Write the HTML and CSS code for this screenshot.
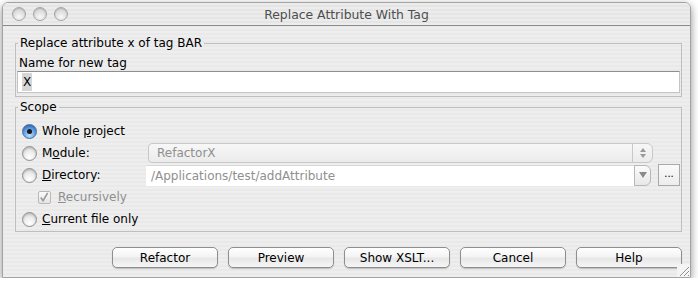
FILE: index.html
```html
<!DOCTYPE html>
<html>
<head>
  <title>Replace Attribute With Tag</title>
  <link rel="stylesheet" href="styles.css">
</head>
<body>
  <div class="window">
    <div class="titlebar">
      <div class="lights">
        <span class="light"></span>
        <span class="light"></span>
        <span class="light"></span>
      </div>
      <div class="title">Replace Attribute With Tag</div>
      <div></div>
    </div>

    <div class="content">
      <fieldset class="group">
        <legend>Replace attribute x of tag BAR</legend>
        <div class="field-label">Name for new tag</div>
        <div class="textfield"><span class="selected">X</span></div>
      </fieldset>

      <fieldset class="group scope">
        <legend>Scope</legend>
        <div class="options">
          <div class="option">
            <span class="radio checked"></span>
            <span class="choice">Whole <u>p</u>roject</span>
          </div>
          <div class="option">
            <span class="radio"></span>
            <span class="choice">M<u>o</u>dule:</span>
            <div class="combo disabled">
              <span class="combo-text">RefactorX</span>
              <span class="spin">
                <svg width="8" height="12" viewBox="0 0 8 12">
                  <path d="M4 1 L7 5 L1 5 Z" fill="#9a9a9a"/>
                  <path d="M1 7 L7 7 L4 11 Z" fill="#9a9a9a"/>
                </svg>
              </span>
            </div>
          </div>
          <div class="option">
            <span class="radio"></span>
            <span class="choice short"><u>D</u>irectory:</span>
            <div class="combo editable">
              <span class="combo-text">/Applications/test/addAttribute</span>
              <span class="drop">
                <svg width="8" height="6" viewBox="0 0 8 6">
                  <path d="M0 0 L8 0 L4 6 Z" fill="#8a8a8a"/>
                </svg>
              </span>
            </div>
            <span class="browse">...</span>
          </div>
          <div class="option sub">
            <span class="checkbox">
              <svg width="13" height="13" viewBox="0 0 13 13">
                <path d="M3 6.5 L5.5 10 L10.5 1.5" fill="none" stroke="#9c9c9c" stroke-width="1.8"/>
              </svg>
            </span>
            <span class="choice dim"><u>R</u>ecursively</span>
          </div>
          <div class="option">
            <span class="radio"></span>
            <span class="choice"><u>C</u>urrent file only</span>
          </div>
        </div>
      </fieldset>

      <div class="buttons">
        <button>Refactor</button>
        <button>Preview</button>
        <button>Show XSLT...</button>
        <button>Cancel</button>
        <button>Help</button>
      </div>
    </div>

    <div class="grip">
      <svg width="13" height="13" viewBox="0 0 13 13">
        <path d="M12 3 L3 12 M12 7 L7 12 M12 11 L11 12" stroke="#8c8c8c" stroke-width="1"/>
        <path d="M12 4 L4 12 M12 8 L8 12" stroke="#ffffff" stroke-width="1"/>
      </svg>
    </div>
  </div>
</body>
</html>
```

FILE: styles.css
```css
* {
  box-sizing: border-box;
}

body {
  margin: 0;
  background: #fff;
  font-family: "DejaVu Sans", sans-serif;
  font-size: 12px;
  color: #000;
}

.window {
  position: relative;
  margin: 2px 0 0 2px;
  width: 689px;
  height: 276px;
  border: 1px solid #a3a3a3;
  border-radius: 6px 6px 0 0;
  background: repeating-linear-gradient(to bottom, #eeeeee 0, #eeeeee 2px, #e9e9e9 2px, #e9e9e9 4px);
  box-shadow: 0 3px 8px rgba(0, 0, 0, 0.45);
  overflow: hidden;
}

.titlebar {
  display: grid;
  grid-template-columns: 1fr auto 1fr;
  align-items: center;
  height: 23px;
  border-bottom: 1px solid #8c8c8c;
  background: repeating-linear-gradient(to bottom, #ececec 0, #ececec 2px, #e5e5e5 2px, #e5e5e5 4px);
}

.lights {
  display: flex;
  gap: 7px;
  padding-left: 9px;
}

.light {
  width: 14px;
  height: 14px;
  border-radius: 50%;
  border: 1px solid #a4a4a4;
  background: radial-gradient(circle at 50% 75%, #f8f8f8 0, #e2e2e2 45%, #c9c9c9 100%);
  box-shadow: inset 0 1px 1px rgba(0, 0, 0, 0.15);
}

.title {
  font-size: 12.4px;
  color: #4e4e4e;
  padding-top: 1px;
}

.content {
  padding: 9px 8px 0 12px;
}

.group {
  margin: 0;
  padding: 0 1px 3px 1px;
  border: 1px solid #bfbfbf;
}

.group legend {
  margin-left: 1px;
  padding: 0 2px;
  line-height: 16px;
}

.field-label {
  margin-top: 4px;
  padding-left: 2px;
  line-height: 16px;
}

.textfield {
  display: flex;
  align-items: center;
  height: 22px;
  padding-left: 4px;
  background: #fff;
  border: 1px solid #c4c4c4;
  border-top-color: #8e8e8e;
}

.selected {
  background: #d6d6d6;
  padding: 2px 1px;
}

.scope {
  margin-top: 2px;
  padding-bottom: 1px;
}

.options {
  padding-top: 5px;
}

.option {
  display: flex;
  align-items: center;
  height: 22px;
  padding-left: 5px;
}

.radio {
  width: 15px;
  height: 15px;
  border-radius: 50%;
  border: 1px solid #8f8f8f;
  background: radial-gradient(circle at 50% 80%, #ffffff 0, #f0f0f0 40%, #d2d2d2 100%);
  box-shadow: inset 0 1px 2px rgba(0, 0, 0, 0.2);
  display: flex;
  align-items: center;
  justify-content: center;
  flex-shrink: 0;
}

.radio.checked {
  border-color: #4a6c9c;
  background: radial-gradient(circle at 50% 80%, #b8e0ff 0, #6aa8ea 45%, #2a66bf 100%);
}

.radio.checked::after {
  content: "";
  width: 5px;
  height: 5px;
  border-radius: 50%;
  background: #1a1a1a;
}

.choice {
  margin-left: 5px;
  width: 106px;
  line-height: 16px;
}

.choice.short {
  width: 104px;
}

.dim {
  color: #8f8f8f;
}

.combo {
  flex: 1;
  display: flex;
  height: 20px;
}

.combo.disabled {
  margin-right: 27px;
  border: 1px solid #c8c8c8;
  border-radius: 4px 6px 6px 4px;
  background: linear-gradient(#f7f7f7, #ebebeb);
}

.combo-text {
  flex: 1;
  display: flex;
  align-items: center;
  padding-left: 8px;
  color: #8f8f8f;
}

.spin {
  width: 20px;
  display: flex;
  align-items: center;
  justify-content: center;
  border-left: 1px solid #c8c8c8;
}

.combo.editable {
  height: 21px;
}

.combo.editable .combo-text {
  padding-left: 5px;
  background: #fff;
  border-top: 1px solid #d8d8d8;
}

.drop {
  width: 17px;
  display: flex;
  align-items: center;
  justify-content: center;
  border: 1px solid #b8b8b8;
  border-radius: 0 6px 6px 0;
  background: linear-gradient(#fbfbfb, #e8e8e8);
}

.browse {
  width: 22px;
  height: 22px;
  margin-left: 7px;
  border: 1px solid #a9a9a9;
  background: linear-gradient(#fbfbfb, #ececec);
  font-size: 10px;
  text-align: center;
  line-height: 18px;
}

.option.sub {
  padding-left: 21px;
}

.checkbox {
  width: 13px;
  height: 13px;
  border: 1px solid #b8b8b8;
  border-radius: 2px;
  background: linear-gradient(#fbfbfb, #e4e4e4);
  display: flex;
}

.checkbox svg {
  margin: -1px 0 0 -1px;
}

.option.sub .choice {
  margin-left: 7px;
}

.buttons {
  display: flex;
  justify-content: flex-end;
  gap: 10px;
  margin-top: 15px;
}

.buttons button {
  width: 106px;
  height: 21px;
  padding: 0;
  border: 1px solid #8e8e8e;
  border-radius: 5px;
  background: linear-gradient(#ffffff, #f4f4f4 45%, #e7e7e7 55%, #f6f6f6);
  box-shadow: 0 1px 1px rgba(0, 0, 0, 0.2);
  font-family: "DejaVu Sans", sans-serif;
  font-size: 12px;
  color: #000;
}

.grip {
  position: absolute;
  right: 0;
  bottom: 0;
  width: 13px;
  height: 13px;
  background: #f4f4f4;
}
```
